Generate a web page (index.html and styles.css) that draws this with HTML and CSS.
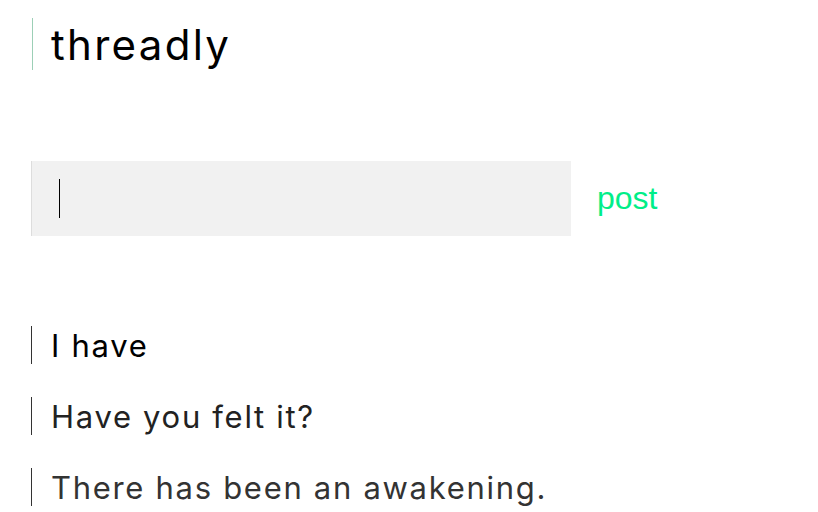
FILE: index.html
```html
<!DOCTYPE html>
<html>
<head>
<meta charset="utf-8">
<link rel="stylesheet" href="styles.css">
</head>
<body>
<div class="app">
  <h1 class="title">threadly</h1>
  <div class="composer">
    <div class="input"><span class="caret"></span></div>
    <span class="post-btn">post</span>
  </div>
  <ul class="posts">
    <li class="post p1">I have</li>
    <li class="post p2">Have you felt it?</li>
    <li class="post p3">There has been an awakening.</li>
  </ul>
</div>
</body>
</html>
```
FILE: styles.css
```css
html, body {
  margin: 0;
  padding: 0;
  background: #fff;
  overflow: hidden;
}
.app {
  padding: 18px 0 0 31px;
  font-family: Inter, sans-serif;
}
.title {
  margin: 0 0 0 1px;
  height: 52px;
  border-left: 1px solid #9ccfb6;
  padding-left: 18px;
  font-size: 42px;
  font-weight: 400;
  letter-spacing: 2.3px;
  line-height: 54px;
  color: #000;
}
.composer {
  margin-top: 91px;
  display: flex;
  align-items: center;
}
.input {
  width: 540px;
  height: 75px;
  background: #f1f1f1;
  border-left: 1px solid #ddd;
  display: flex;
  align-items: center;
  padding-left: 27px;
  box-sizing: border-box;
}
.caret {
  width: 1px;
  height: 39px;
  background: #000;
}
.post-btn {
  margin-left: 26px;
  font-family: "Liberation Sans", Arial, sans-serif;
  font-size: 32px;
  color: #00ee88;
}
.posts {
  list-style: none;
  margin: 90px 0 0;
  padding: 0;
  display: flex;
  flex-direction: column;
  gap: 33px;
}
.post {
  border-left: 1px solid #333;
  height: 38px;
  line-height: 39px;
  padding-left: 19px;
  font-size: 31px;
  letter-spacing: 1.7px;
}
.p1 { color: #000; }
.p2 { color: #222; }
.p3 { color: #333; }
```
